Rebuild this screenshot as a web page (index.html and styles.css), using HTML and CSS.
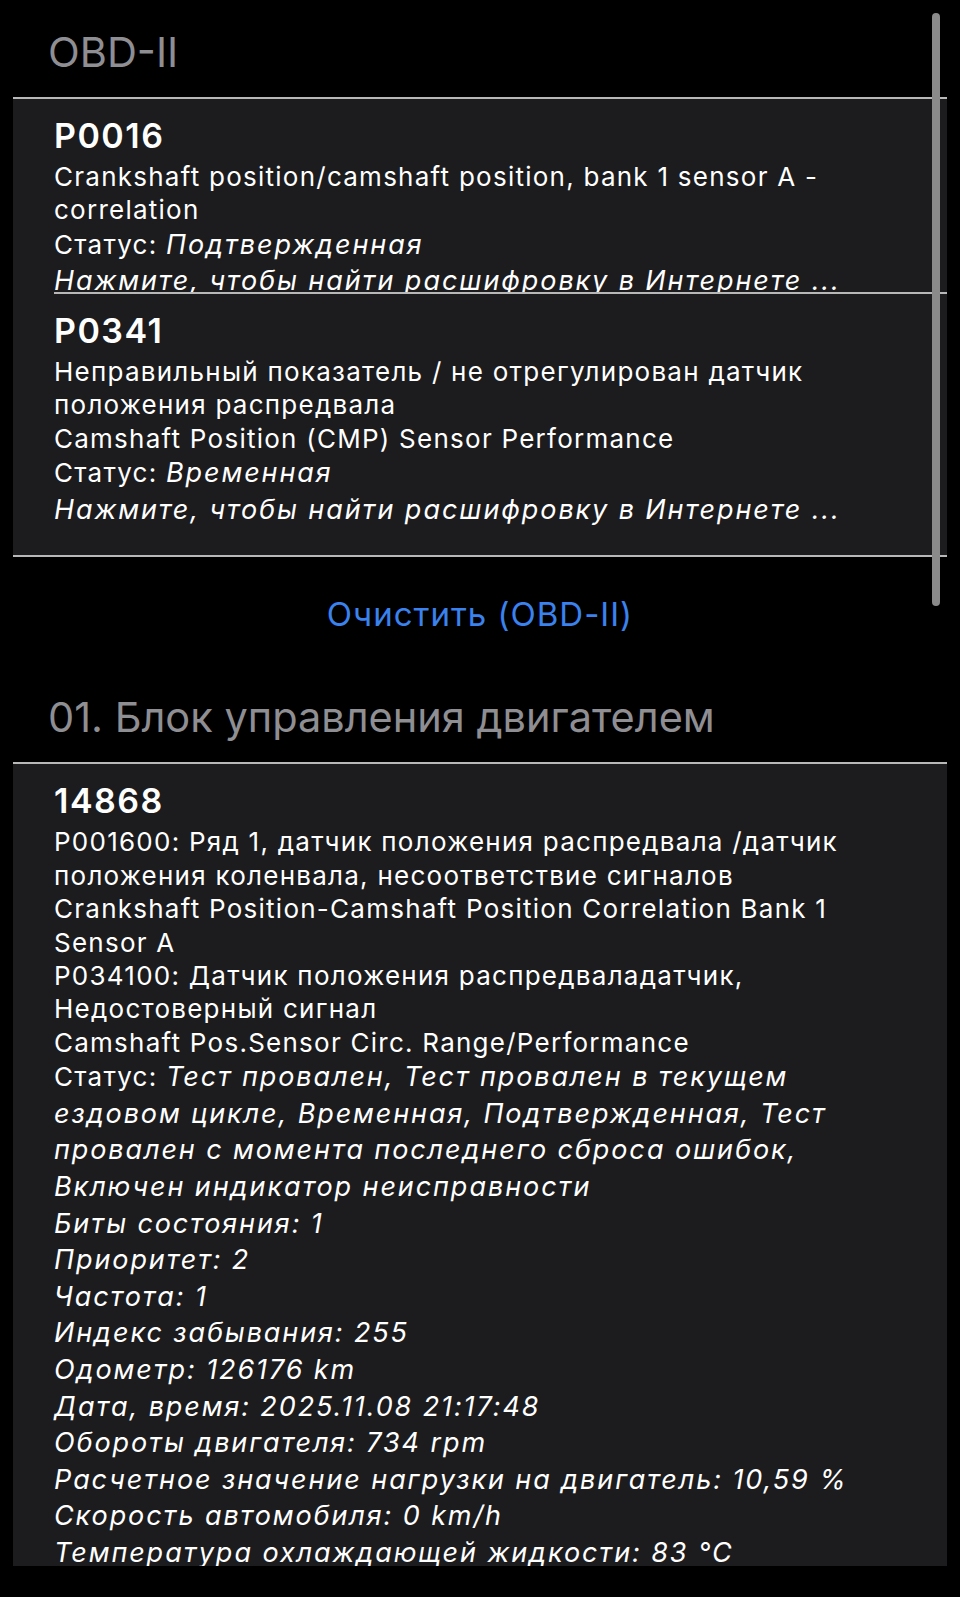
FILE: index.html
```html
<!DOCTYPE html>
<html lang="ru">
<head>
    <meta charset="UTF-8">
    <meta name="viewport" content="width=device-width, initial-scale=1.0">
    <title>OBD-II</title>
    <link rel="stylesheet" href="styles.css">
</head>
<body>

    <div class="screen">
        <h2 class="section-title">OBD-II</h2>

        <div class="card">
            <div class="row row-clipped">
                <div class="code">P0016</div>
                <p>Crankshaft position/camshaft position, bank 1 sensor A - correlation</p>
                <p>Статус: <i>Подтвержденная</i></p>
                <p><i>Нажмите, чтобы найти расшифровку в Интернете ...</i></p>
            </div>
            <div class="row">
                <div class="code">P0341</div>
                <p>Неправильный показатель / не отрегулирован датчик положения распредвала</p>
                <p>Camshaft Position (CMP) Sensor Performance</p>
                <p>Статус: <i>Временная</i></p>
                <p><i>Нажмите, чтобы найти расшифровку в Интернете ...</i></p>
            </div>
        </div>

        <button class="action" type="button">Очистить (OBD-II)</button>

        <h2 class="section-title">01. Блок управления двигателем</h2>

        <div class="card card-cut">
            <div class="row">
                <div class="code">14868</div>
                <p>P001600: Ряд 1, датчик положения распредвала /датчик положения коленвала, несоответствие сигналов</p>
                <p>Crankshaft Position-Camshaft Position Correlation Bank 1 Sensor A</p>
                <p>P034100: Датчик положения распредваладатчик, Недостоверный сигнал</p>
                <p>Camshaft Pos.Sensor Circ. Range/Performance</p>
                <p>Статус: <i>Тест провален, Тест провален в текущем ездовом цикле, Временная, Подтвержденная, Тест провален с момента последнего сброса ошибок, Включен индикатор неисправности</i></p>
                <p><i>Биты состояния: 1</i></p>
                <p><i>Приоритет: 2</i></p>
                <p><i>Частота: 1</i></p>
                <p><i>Индекс забывания: 255</i></p>
                <p><i>Одометр: 126176 km</i></p>
                <p><i>Дата, время: 2025.11.08 21:17:48</i></p>
                <p><i>Обороты двигателя: 734 rpm</i></p>
                <p><i>Расчетное значение нагрузки на двигатель: 10,59 %</i></p>
                <p><i>Скорость автомобиля: 0 km/h</i></p>
                <p><i>Температура охлаждающей жидкости: 83 °C</i></p>
            </div>
        </div>

        <div class="scrollbar"></div>
    </div>

</body>
</html>
```

FILE: styles.css
```css
/* dark grouped list, iOS style */
body {
    margin: 0;
    padding: 0;
    background-color: #000;
    color: #fff;
    font-family: Inter, "Noto Sans", sans-serif;
}

.screen {
    position: relative;
    height: 1597px;
    overflow: hidden;
}

.section-title {
    margin: 0 0 20px 0;
    padding-left: 48px;
    font-size: 41.5px;
    font-weight: 400;
    line-height: 50px;
    color: #8e8e93;
}

.screen > .section-title:first-child {
    padding-top: 27px;
}

.card {
    margin: 0 13px;
    background-color: #1c1c1e;
    border-top: 2px solid #b8b8b8;
    border-bottom: 2px solid #b8b8b8;
}

.card-cut {
    height: 804px;
    box-sizing: border-box;
    overflow: hidden;
    border-bottom: none;
}

.row {
    margin-left: 41px;
    padding: 16px 41px 27px 0;
}

.row + .row {
    border-top: 2px solid #b8b8b8;
}

.row-clipped {
    height: 193px;
    box-sizing: border-box;
    overflow: hidden;
}

.code {
    margin-bottom: 3px;
    font-size: 34px;
    font-weight: 600;
    line-height: 42px;
    letter-spacing: 1.5px;
}

.row p {
    margin: 0;
    font-size: 26px;
    line-height: 33.4px;
    letter-spacing: 1.25px;
}

.row i {
    font-style: italic;
    font-size: 27px;
    line-height: 36.6px;
    letter-spacing: 1.9px;
}

.action {
    display: block;
    margin: 37px auto 58px auto;
    padding: 0;
    border: none;
    background: none;
    font-family: inherit;
    font-size: 33px;
    line-height: 40px;
    letter-spacing: 1px;
    color: #3a82ee;
    cursor: pointer;
}

.scrollbar {
    position: absolute;
    top: 13px;
    left: 932px;
    width: 8px;
    height: 593px;
    border-radius: 4px;
    background-color: #8a8a8a;
}
```
